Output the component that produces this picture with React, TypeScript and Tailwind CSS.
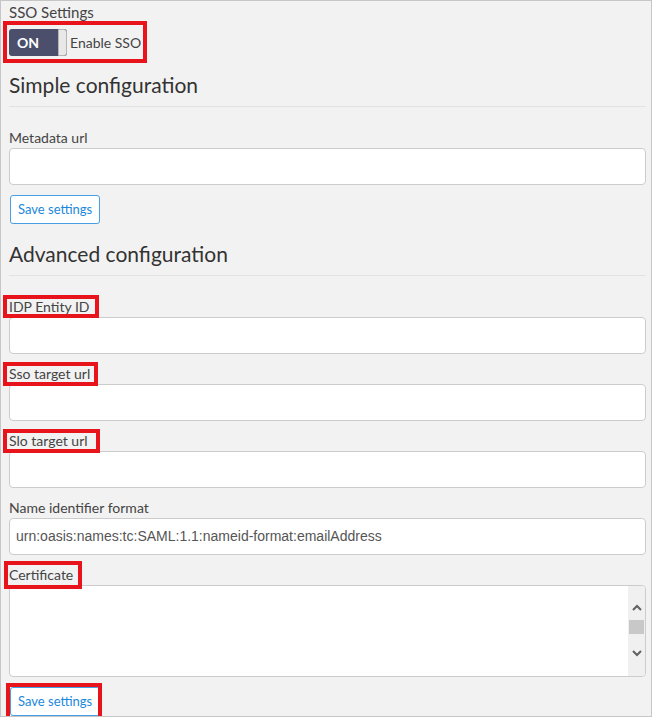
import React from 'react';

// red annotation frame drawn over a piece of the form
const Mark = ({ children, box }: { children: React.ReactNode; box: string }) => (
  <span className="relative inline-block">
    {children}
    <span className={`pointer-events-none absolute z-10 border-4 border-[#e8141c] ${box}`} />
  </span>
);

const Field = ({
  label,
  box,
  value,
}: {
  label: string;
  box?: string;
  value?: string;
}) => (
  <div className="mb-[10px]">
    <div className="h-5 text-[14px] leading-5 text-[#444]">
      {box ? <Mark box={box}>{label}</Mark> : label}
    </div>
    <div className="flex h-[37px] w-full items-center rounded-[4px] border border-[#cccccc] bg-white px-[6px] font-['Liberation_Sans',Arial,sans-serif] text-[14px] text-[#555]">
      {value}
    </div>
  </div>
);

const SaveButton = () => (
  <button className="h-[29px] rounded-[3px] border border-[#4a9fe2] bg-white px-[7px] text-[13px] text-[#1b88db]">
    Save settings
  </button>
);

const Heading = ({ children }: { children: React.ReactNode }) => (
  <div className="mb-[21px] border-b border-[#e2e2e2] pb-[6px]">
    <h3 className="text-[21px] leading-[30px] text-[#333]">{children}</h3>
  </div>
);

export default function App() {
  return (
    <div className="h-[717px] w-[652px] overflow-hidden border border-[#c6c6c6] bg-[#f2f2f2] pl-2 pr-[5px] font-['Lato','Noto_Sans',sans-serif]">
      <div className="mt-[1px] h-5 text-[15px] leading-5 text-[#444]">SSO Settings</div>

      {/* toggle */}
      <div className="mt-[7px] h-[27px]">
        <Mark box="-left-[6px] -right-[6px] -top-[8px] -bottom-[7px]">
          <div className="flex h-[27px] items-center">
            <div className="flex h-[27px] w-[58px] items-center rounded-[3px] bg-[#4b4f6c] pl-[8px]">
              <span className="text-[14px] font-bold text-white">ON</span>
              <span className="ml-auto h-full w-[9px] rounded-r-[3px] border border-[#b5b5b5] bg-[#e8e8e8]" />
            </div>
            <span className="ml-[3px] text-[14px] text-[#444]">Enable SSO</span>
          </div>
        </Mark>
      </div>

      <div className="mt-[14px]">
        <Heading>Simple configuration</Heading>
      </div>
      <Field label="Metadata url" />
      <div className="pl-[1px]">
        <SaveButton />
      </div>

      <div className="mt-[15px]">
        <Heading>Advanced configuration</Heading>
      </div>
      <Field label="IDP Entity ID" box="-left-[6px] -right-[10px] -top-[2px] -bottom-[1px]" />
      <Field label="Sso target url" box="-left-[6px] -right-[8px] -top-[2px] -bottom-[2px]" />
      <Field label="Slo target url" box="-left-[6px] -right-[12px] -top-[2px] -bottom-[2px]" />
      <Field
        label="Name identifier format"
        value="urn:oasis:names:tc:SAML:1.1:nameid-format:emailAddress"
      />

      <div className="mb-[10px]">
        <div className="h-5 text-[14px] leading-5 text-[#444]">
          <Mark box="-left-[5px] -right-[9px] -top-[4px] -bottom-[4px]">Certificate</Mark>
        </div>
        <div className="flex h-[92px] w-full overflow-hidden rounded-[4px] border border-[#cccccc] bg-white">
          <div className="flex-1" />
          <div className="flex w-[17px] flex-col items-center bg-[#f0f0f0]">
            <svg className="mt-[18px]" width="10" height="8" viewBox="0 0 10 8">
              <path d="M1 6 L5 2 L9 6" fill="none" stroke="#606060" strokeWidth="2" />
            </svg>
            <div className="mt-[8px] h-[14px] w-[15px] bg-[#c8c8c8]" />
            <svg className="mt-[15px]" width="10" height="8" viewBox="0 0 10 8">
              <path d="M1 2 L5 6 L9 2" fill="none" stroke="#606060" strokeWidth="2" />
            </svg>
          </div>
        </div>
      </div>

      <div className="pl-[1px]">
        <Mark box="-left-[4px] -right-[2px] -top-[4px] -bottom-[4px]">
          <SaveButton />
        </Mark>
      </div>
    </div>
  );
}
